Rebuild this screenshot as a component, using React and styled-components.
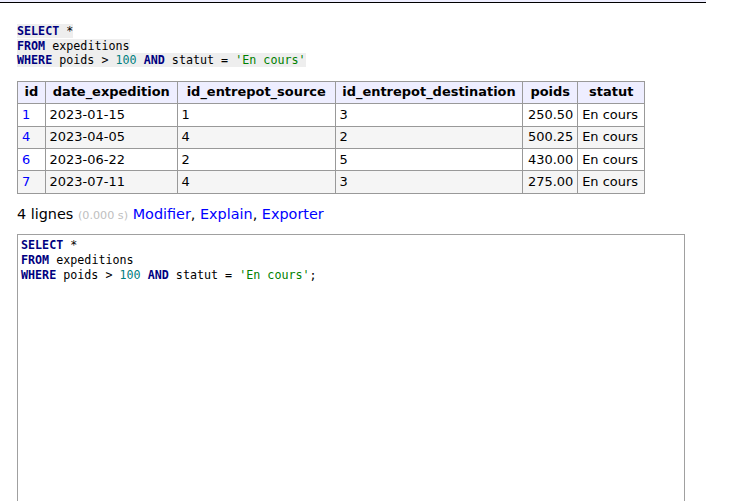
import React from "react";
import styled, { createGlobalStyle } from "styled-components";

const GlobalStyle = createGlobalStyle`
  body {
    margin: 0;
    background: #fff;
    color: #000;
    font: 14.4px/1.25 "DejaVu Sans", Verdana, sans-serif;
  }
`;

const TopBar = styled.div`
  width: 706px;
  height: 2px;
  background: #eef;
  border-bottom: 1px solid #000;
`;

const Content = styled.div`
  padding: 21px 0 0 17px;
`;

const SqlPre = styled.pre`
  margin: 0;
  font-family: "DejaVu Sans Mono", monospace;
  font-size: 11.7px;
  line-height: 1.25;
  white-space: pre-wrap;
`;

const Code = styled.code`
  font-family: inherit;
  background: #eee;
`;

const Kw = styled.span`
  color: navy;
  font-weight: bold;
`;

const Num = styled.span`
  color: #008080;
`;

const Str = styled.span`
  color: green;
`;

const ResultTable = styled.table`
  margin: 13px 0 0;
  border-collapse: collapse;
  border-top: 1px solid #999;
  border-left: 1px solid #999;
  font-size: 12.96px;
  line-height: 1.25;
`;

const Th = styled.th`
  box-sizing: border-box;
  width: ${(p) => p.$w}px;
  background: #eef;
  text-align: center;
  font-weight: bold;
  padding: 2.6px 6.5px;
  border-right: 1px solid #999;
  border-bottom: 1px solid #999;
  white-space: nowrap;
`;

const Row = styled.tr`
  background: ${(p) => (p.$odd ? "#f5f5f5" : "#fff")};
`;

const Td = styled.td`
  padding: 2.6px 3.9px;
  text-align: ${(p) => (p.$number ? "right" : "left")};
  border-right: 1px solid #999;
  border-bottom: 1px solid #999;
  white-space: nowrap;
`;

const Link = styled.a`
  color: blue;
  text-decoration: none;
`;

const Info = styled.p`
  margin: 11.5px 0 0;
`;

const Time = styled.span`
  color: silver;
  font-size: 11.2px;
`;

const Editor = styled.div`
  box-sizing: border-box;
  width: 668px;
  height: 290px;
  margin-top: 11px;
  padding: 3px 3px;
  border: 1px solid #a0a0a0;
  font-family: "DejaVu Sans Mono", monospace;
  font-size: 11.7px;
  line-height: 1.25;
  white-space: pre-wrap;
`;

const rows = [
  ["1", "2023-01-15", "1", "3", "250.50", "En cours"],
  ["4", "2023-04-05", "4", "2", "500.25", "En cours"],
  ["6", "2023-06-22", "2", "5", "430.00", "En cours"],
  ["7", "2023-07-11", "4", "3", "275.00", "En cours"],
];

// column widths as measured on the result grid
const columns = [
  { name: "id", w: 27 },
  { name: "date_expedition", w: 132 },
  { name: "id_entrepot_source", w: 158 },
  { name: "id_entrepot_destination", w: 186 },
  { name: "poids", w: 55 },
  { name: "statut", w: 67 },
];

const Query = ({ semicolon }) => (
  <>
    <Kw>SELECT</Kw> *{"\n"}
    <Kw>FROM</Kw> expeditions{"\n"}
    <Kw>WHERE</Kw> poids &gt; <Num>100</Num> <Kw>AND</Kw> statut = <Str>'En cours'</Str>
    {semicolon ? ";" : ""}
  </>
);

const App = () => {
  return (
    <>
      <GlobalStyle />
      <TopBar />
      <Content>
        <SqlPre>
          <Code>
            <Query />
          </Code>
        </SqlPre>

        <ResultTable>
          <thead>
            <tr>
              {columns.map((c) => (
                <Th key={c.name} $w={c.w}>
                  {c.name}
                </Th>
              ))}
            </tr>
          </thead>
          <tbody>
            {rows.map((r, i) => (
              <Row key={r[0]} $odd={i % 2 === 1}>
                <Td>
                  <Link href="#">{r[0]}</Link>
                </Td>
                <Td>{r[1]}</Td>
                <Td>{r[2]}</Td>
                <Td>{r[3]}</Td>
                <Td $number>{r[4]}</Td>
                <Td>{r[5]}</Td>
              </Row>
            ))}
          </tbody>
        </ResultTable>

        <Info>
          4 lignes <Time>(0.000 s)</Time> <Link href="#">Modifier</Link>,{" "}
          <Link href="#">Explain</Link>, <Link href="#">Exporter</Link>
        </Info>

        <Editor>
          <Query semicolon />
        </Editor>
      </Content>
    </>
  );
};

export default App;
